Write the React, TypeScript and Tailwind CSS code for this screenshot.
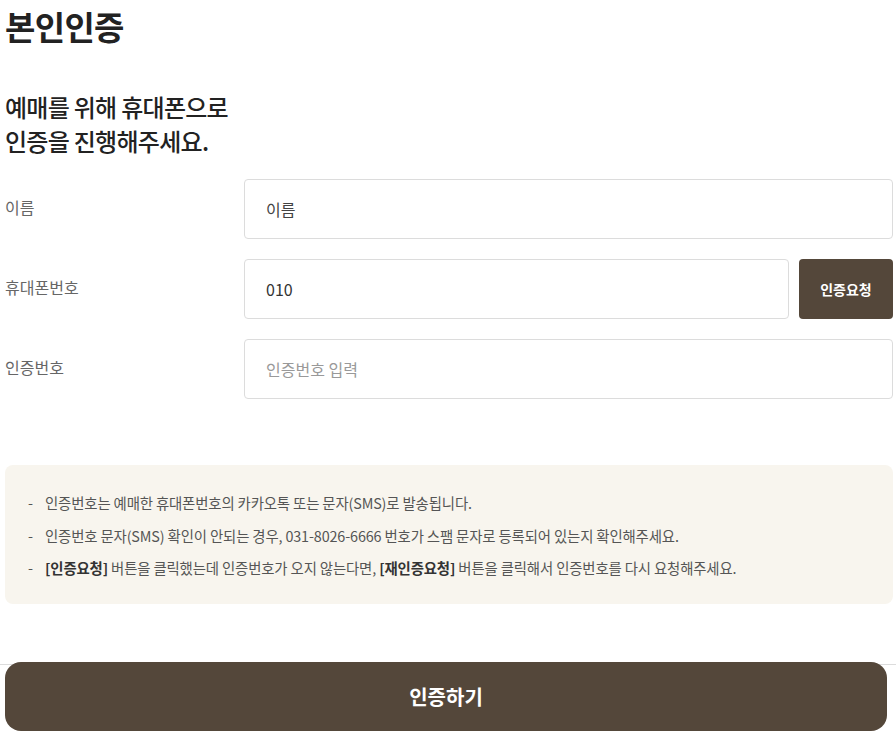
import React, { useState } from 'react';

const FONT = { fontFamily: '"Noto Sans CJK KR", "Noto Sans", sans-serif' };

const notices: React.ReactNode[] = [
  <>인증번호는 예매한 휴대폰번호의 카카오톡 또는 문자(SMS)로 발송됩니다.</>,
  <>인증번호 문자(SMS) 확인이 안되는 경우, 031-8026-6666 번호가 스팸 문자로 등록되어 있는지 확인해주세요.</>,
  <>
    <b className="font-bold text-[#333]">[인증요청]</b> 버튼을 클릭했는데 인증번호가 오지 않는다면,{' '}
    <b className="font-bold text-[#333]">[재인증요청]</b> 버튼을 클릭해서 인증번호를 다시 요청해주세요.
  </>,
];

const Row: React.FC<{ label: string; children: React.ReactNode }> = ({ label, children }) => (
  <div className="flex items-center">
    <div className="w-[239px] shrink-0 text-[16px] text-[#666] -mt-[4px]">{label}</div>
    <div className="flex flex-1 gap-[10px]">{children}</div>
  </div>
);

export default function App() {
  const [name, setName] = useState('');
  const [phone, setPhone] = useState('010');
  const [code, setCode] = useState('');

  return (
    <div className="min-h-[736px] bg-white flex flex-col text-[#222]" style={FONT}>
      <div className="pl-[5px] pr-[3px] flex-1">
        <h1 className="text-[33px] font-bold leading-[46px] pt-[3px] tracking-[-0.02em]">본인인증</h1>

        <p className="mt-[41px] text-[24px] font-medium leading-[34px] tracking-[-0.03em]">
          예매를 위해 휴대폰으로
          <br />
          인증을 진행해주세요.
        </p>

        <div className="mt-[21px] flex flex-col gap-[20px]">
          <Row label="이름">
            <input
              value={name}
              onChange={e => setName(e.target.value)}
              placeholder="이름"
              className="h-[60px] w-full rounded-[4px] border border-[#dcdcdc] px-[21px] text-[16px] text-[#333] placeholder:text-[#444] outline-none"
            />
          </Row>
          <Row label="휴대폰번호">
            <input
              value={phone}
              onChange={e => setPhone(e.target.value)}
              className="h-[60px] flex-1 min-w-0 rounded-[4px] border border-[#dcdcdc] px-[21px] text-[16px] text-[#333] outline-none"
            />
            <button className="h-[60px] w-[94px] shrink-0 rounded-[4px] bg-[#54473a] text-[14px] font-bold text-white">
              인증요청
            </button>
          </Row>
          <Row label="인증번호">
            <input
              value={code}
              onChange={e => setCode(e.target.value)}
              placeholder="인증번호 입력"
              className="h-[60px] w-full rounded-[4px] border border-[#dcdcdc] px-[21px] text-[16px] text-[#333] placeholder:text-[#999] outline-none"
            />
          </Row>
        </div>

        <ul className="mt-[66px] rounded-[8px] bg-[#f8f5ee] px-[23px] pt-[22px] pb-[19px] text-[14.4px] text-[#555] tracking-[-0.01em]">
          {notices.map((n, i) => (
            <li key={i} className="flex leading-[32.5px]">
              <span className="w-[17px] shrink-0">-</span>
              <span>{n}</span>
            </li>
          ))}
        </ul>
      </div>

      <div className="mt-[58px] border-t border-[#dcdcdc]">
        <button className="-mt-[3px] mb-[5px] ml-[5px] h-[69px] w-[882px] rounded-[16px] bg-[#54473a] text-[20px] font-bold text-white">
          인증하기
        </button>
      </div>
    </div>
  );
}
